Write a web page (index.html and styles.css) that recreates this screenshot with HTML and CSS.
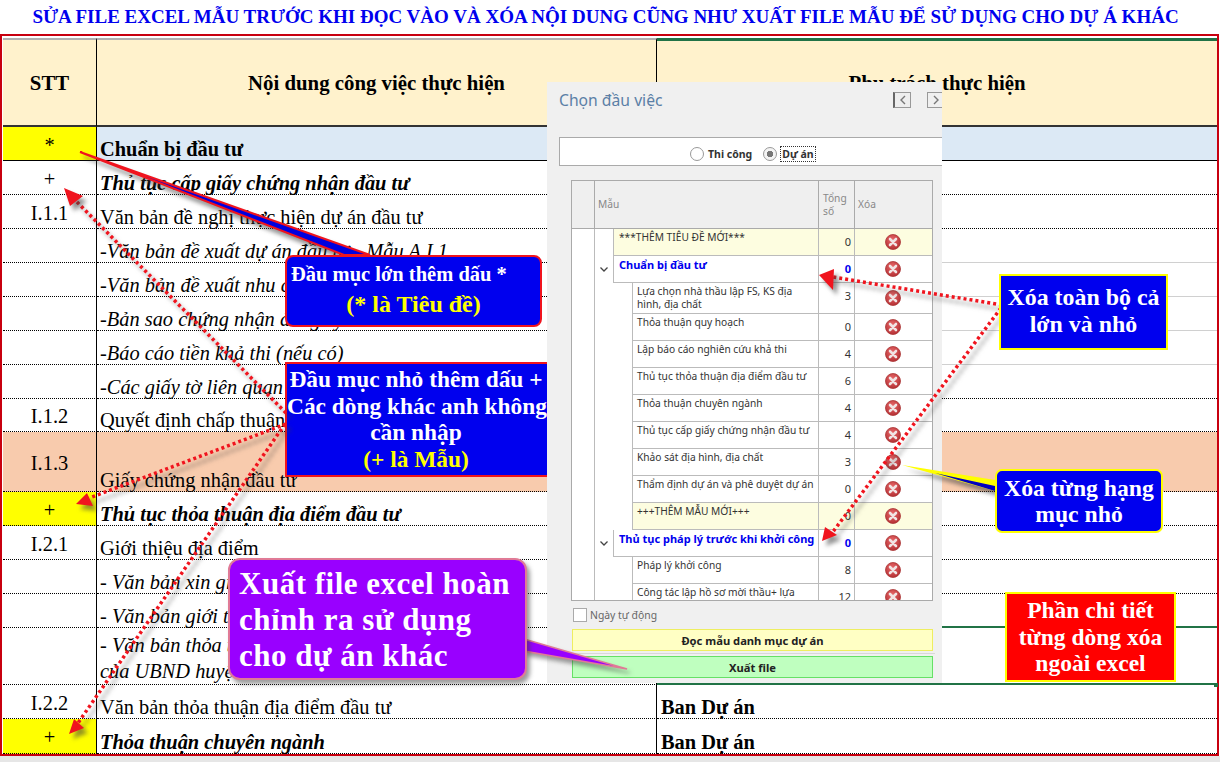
FILE: index.html
```html
<!DOCTYPE html>
<html lang="vi">

<head>
    <meta charset="UTF-8">
    <meta name="viewport" content="width=device-width, initial-scale=1.0">
    <title>Sửa file excel mẫu</title>
    <link rel="stylesheet" href="styles.css">
</head>

<body>
    <svg class="defs" width="0" height="0">
        <defs>
            <radialGradient id="delFill" cx="45%" cy="35%" r="70%">
                <stop offset="0" stop-color="#e8686a" />
                <stop offset="1" stop-color="#b12c30" />
            </radialGradient>
            <symbol id="del" viewBox="0 0 16 16">
                <circle cx="8" cy="8" r="7.5" fill="url(#delFill)" stroke="#a33" stroke-width="0.8" />
                <path d="M5 5l6 6M11 5l-6 6" stroke="#f1e4e4" stroke-width="2.6" stroke-linecap="round" fill="none" />
            </symbol>
        </defs>
    </svg>

    <h1 class="page-title">SỬA FILE EXCEL MẪU TRƯỚC KHI ĐỌC VÀO VÀ XÓA NỘI DUNG CŨNG NHƯ XUẤT FILE MẪU ĐỂ SỬ DỤNG CHO DỰ Á KHÁC</h1>

    <div class="sheet">
        <table class="tbl">
            <colgroup>
                <col class="c-stt">
                <col class="c-name">
                <col class="c-owner">
            </colgroup>
            <tr class="r-head">
                <th>STT</th>
                <th>Nội dung công việc thực hiện</th>
                <th class="head-green">Phụ trách thực hiện</th>
            </tr>
            <tr class="r-main">
                <td class="stt yellow">*</td>
                <td class="name title-row">Chuẩn bị đầu tư</td>
                <td class="title-row"></td>
            </tr>
            <tr>
                <td class="stt">+</td>
                <td class="name group">Thủ tục cấp giấy chứng nhận đầu tư</td>
                <td></td>
            </tr>
            <tr>
                <td class="stt">I.1.1</td>
                <td class="name">Văn bản đề nghị thực hiện dự án đầu tư</td>
                <td></td>
            </tr>
            <tr>
                <td class="stt"></td>
                <td class="name note">-Văn bản đề xuất dự án đầu tư - Mẫu A.I.1</td>
                <td class="thin"></td>
            </tr>
            <tr>
                <td class="stt"></td>
                <td class="name note">-Văn bản đề xuất nhu cầu sử dụng đất</td>
                <td class="thin"></td>
            </tr>
            <tr>
                <td class="stt"></td>
                <td class="name note">-Bản sao chứng nhận đăng ký kinh doanh</td>
                <td class="thin"></td>
            </tr>
            <tr>
                <td class="stt"></td>
                <td class="name note">-Báo cáo tiền khả thi (nếu có)</td>
                <td class="thin"></td>
            </tr>
            <tr>
                <td class="stt"></td>
                <td class="name note">-Các giấy tờ liên quan khác</td>
                <td></td>
            </tr>
            <tr class="r-short">
                <td class="stt">I.1.2</td>
                <td class="name">Quyết định chấp thuận đầu tư</td>
                <td></td>
            </tr>
            <tr class="r-tall peach">
                <td class="stt">I.1.3</td>
                <td class="name">Giấy chứng nhận đầu tư</td>
                <td></td>
            </tr>
            <tr>
                <td class="stt yellow">+</td>
                <td class="name group">Thủ tục thỏa thuận địa điểm đầu tư</td>
                <td></td>
            </tr>
            <tr>
                <td class="stt">I.2.1</td>
                <td class="name">Giới thiệu địa điểm</td>
                <td></td>
            </tr>
            <tr>
                <td class="stt"></td>
                <td class="name note">- Văn bản xin giới thiệu địa điểm</td>
                <td></td>
            </tr>
            <tr>
                <td class="stt"></td>
                <td class="name note">- Văn bản giới thiệu địa điểm</td>
                <td class="sel"></td>
            </tr>
            <tr class="r-wrap">
                <td class="stt"></td>
                <td class="name note">- Văn bản thỏa thuận địa điểm<br>của UBND huyện</td>
                <td class="sel"></td>
            </tr>
            <tr>
                <td class="stt">I.2.2</td>
                <td class="name">Văn bản thỏa thuận địa điểm đầu tư</td>
                <td class="owner">Ban Dự án</td>
            </tr>
            <tr class="r-last">
                <td class="stt yellow">+</td>
                <td class="name group">Thỏa thuận chuyên ngành</td>
                <td class="owner">Ban Dự án</td>
            </tr>
        </table>
    </div>
    <div class="sheet-foot"></div>

    <div class="note-box note-small">Đầu mục nhỏ thêm dấu +<br>Các dòng khác anh không<br>cần nhập<br><span class="hl">(+ là Mẫu)</span></div>

    <div class="dialog">
        <div class="dlg-head">
            <span class="dlg-title">Chọn đầu việc</span>
            <span class="nav nav-prev">
                <svg width="8" height="10" viewBox="0 0 8 10"><path d="M6 1L2 5l4 4" fill="none" stroke="#777" stroke-width="1.4" /></svg>
            </span>
            <span class="nav nav-next">
                <svg width="8" height="10" viewBox="0 0 8 10"><path d="M2 1l4 4-4 4" fill="none" stroke="#777" stroke-width="1.4" /></svg>
            </span>
        </div>
        <div class="radio-box">
            <span class="radio"></span><b class="radio-label">Thi công</b>
            <span class="radio checked"></span><b class="radio-label focused">Dự án</b>
        </div>

        <div class="grid">
            <div class="grid-head">
                <div class="gh-gutter"></div>
                <div class="gh-name">Mẫu</div>
                <div class="gh-num">Tổng<br>số</div>
                <div class="gh-del">Xóa</div>
            </div>
            <div class="grid-body">
                <div class="row lv1 new">
                    <div class="indent"></div>
                    <div class="cell-name">***THÊM TIÊU ĐỀ MỚI***</div>
                    <div class="cell-num">0</div>
                    <div class="cell-del"><svg class="del"><use href="#del" /></svg></div>
                </div>
                <div class="row lv1 parent">
                    <div class="indent"><svg class="chev" width="10" height="7" viewBox="0 0 10 7"><path d="M1.5 1.5L5 5l3.500-3.500" fill="none" stroke="#444" stroke-width="1.300" /></svg></div>
                    <div class="cell-name">Chuẩn bị đầu tư</div>
                    <div class="cell-num">0</div>
                    <div class="cell-del"><svg class="del"><use href="#del" /></svg></div>
                </div>
                <div class="row lv2 two-line">
                    <div class="indent"></div>
                    <div class="cell-name">Lựa chọn nhà thầu lập FS, KS địa hình, địa chất</div>
                    <div class="cell-num">3</div>
                    <div class="cell-del"><svg class="del"><use href="#del" /></svg></div>
                </div>
                <div class="row lv2">
                    <div class="indent"></div>
                    <div class="cell-name">Thỏa thuận quy hoạch</div>
                    <div class="cell-num">0</div>
                    <div class="cell-del"><svg class="del"><use href="#del" /></svg></div>
                </div>
                <div class="row lv2">
                    <div class="indent"></div>
                    <div class="cell-name">Lập báo cáo nghiên cứu khả thi</div>
                    <div class="cell-num">4</div>
                    <div class="cell-del"><svg class="del"><use href="#del" /></svg></div>
                </div>
                <div class="row lv2">
                    <div class="indent"></div>
                    <div class="cell-name">Thủ tục thỏa thuận địa điểm đầu tư</div>
                    <div class="cell-num">6</div>
                    <div class="cell-del"><svg class="del"><use href="#del" /></svg></div>
                </div>
                <div class="row lv2">
                    <div class="indent"></div>
                    <div class="cell-name">Thỏa thuận chuyên ngành</div>
                    <div class="cell-num">4</div>
                    <div class="cell-del"><svg class="del"><use href="#del" /></svg></div>
                </div>
                <div class="row lv2">
                    <div class="indent"></div>
                    <div class="cell-name">Thủ tục cấp giấy chứng nhận đầu tư</div>
                    <div class="cell-num">4</div>
                    <div class="cell-del"><svg class="del"><use href="#del" /></svg></div>
                </div>
                <div class="row lv2">
                    <div class="indent"></div>
                    <div class="cell-name">Khảo sát địa hình, địa chất</div>
                    <div class="cell-num">3</div>
                    <div class="cell-del"><svg class="del"><use href="#del" /></svg></div>
                </div>
                <div class="row lv2">
                    <div class="indent"></div>
                    <div class="cell-name">Thẩm định dự án và phê duyệt dự án</div>
                    <div class="cell-num">0</div>
                    <div class="cell-del"><svg class="del"><use href="#del" /></svg></div>
                </div>
                <div class="row lv2 new">
                    <div class="indent"></div>
                    <div class="cell-name">+++THÊM MẪU MỚI+++</div>
                    <div class="cell-num">0</div>
                    <div class="cell-del"><svg class="del"><use href="#del" /></svg></div>
                </div>
                <div class="row lv1 parent">
                    <div class="indent"><svg class="chev" width="10" height="7" viewBox="0 0 10 7"><path d="M1.5 1.5L5 5l3.500-3.500" fill="none" stroke="#444" stroke-width="1.300" /></svg></div>
                    <div class="cell-name">Thủ tục pháp lý trước khi khởi công</div>
                    <div class="cell-num">0</div>
                    <div class="cell-del"><svg class="del"><use href="#del" /></svg></div>
                </div>
                <div class="row lv2">
                    <div class="indent"></div>
                    <div class="cell-name">Pháp lý khởi công</div>
                    <div class="cell-num">8</div>
                    <div class="cell-del"><svg class="del"><use href="#del" /></svg></div>
                </div>
                <div class="row lv2">
                    <div class="indent"></div>
                    <div class="cell-name">Công tác lập hồ sơ mời thầu+ lựa</div>
                    <div class="cell-num">12</div>
                    <div class="cell-del"><svg class="del"><use href="#del" /></svg></div>
                </div>
            </div>
        </div>

        <label class="auto-date"><span class="check"></span>Ngày tự động</label>
        <div class="btn btn-read">Đọc mẫu danh mục dự án</div>
        <div class="btn-line"></div>
        <div class="btn btn-export">Xuất file</div>
    </div>

    <svg class="arrows" width="1220" height="762" viewBox="0 0 1220 762">
        <g class="shadowed">
            <polygon points="80,152 370,255 344,255" fill="#0000e0" stroke="#f0141e" stroke-width="2" />
        </g>
        <g class="shadowed">
            <polygon points="902,465 995,480 995,491" fill="#ffff00" />
            <polygon points="935,473 995,486 995,491" fill="#0000c0" />
        </g>
        <g class="shadowed dots">
            <line x1="286" y1="413" x2="74" y2="199" />
            <line x1="286" y1="424" x2="92" y2="497" />
            <line x1="285" y1="424" x2="78" y2="723" />
            <line x1="1002" y1="305" x2="833" y2="277" />
            <line x1="1001" y1="308" x2="832" y2="533" />
        </g>
        <g class="shadowed heads">
            <polygon points="64,188 83,196 70,206" />
            <polygon points="76,504 87,493 93,506" />
            <polygon points="69,734 74,719 84,728" />
            <polygon points="819,275 834,269 833,290" />
            <polygon points="822,541 825,527 837,535" />
        </g>
        <polygon class="tail" points="524,639 627,669 524,651" />
        <rect x="1214" y="683" width="4" height="4" fill="#217346" />
    </svg>

    <div class="note-box note-big">Đầu mục lớn thêm dấu *<div class="hl big-hl">(* là Tiêu đề)</div></div>
    <div class="note-box note-all">Xóa toàn bộ cả<br>lớn và nhỏ</div>
    <div class="note-box note-item">Xóa từng hạng<br>mục nhỏ</div>
    <div class="note-box note-excel">Phần chi tiết<br>từng dòng xóa<br>ngoài excel</div>
    <div class="note-box note-export">Xuất file excel hoàn<br>chỉnh ra sử dụng<br>cho dự án khác</div>
</body>

</html>
```

FILE: styles.css
```css
* {
    margin: 0;
    padding: 0;
    box-sizing: border-box;
}

html,
body {
    width: 1220px;
    height: 762px;
    overflow: hidden;
    background-color: #fff;
    font-family: "Liberation Serif", serif;
}

body {
    position: relative;
}

.defs {
    position: absolute;
}

.page-title {
    height: 34px;
    padding-right: 9px;
    line-height: 34px;
    text-align: center;
    font-size: 19px;
    font-weight: bold;
    color: #0000ee;
    white-space: nowrap;
}

/* bang excel */
.sheet {
    width: 1219px;
    height: 722px;
    padding: 2px 0 0 1px;
    border: 2px solid #c8000f;
}

.sheet-foot {
    height: 6px;
    background-color: #e6e6e6;
}

.tbl {
    width: 1214px;
    table-layout: fixed;
    border-collapse: separate;
    border-spacing: 0;
}

.c-stt {
    width: 94px;
}

.c-name,
.c-owner {
    width: 560px;
}

.tbl tr {
    height: 34px;
}

.tbl td {
    height: 34px;
    padding: 0 3px;
    font-size: 20.4px;
    line-height: 22px;
    vertical-align: bottom;
    white-space: nowrap;
    color: #000;
    border-bottom: 1px dotted #000;
    border-right: 1px solid #000;
}

.tbl td:last-child {
    border-right: none;
    padding-left: 4px;
}

.tbl th {
    height: 89px;
    font-size: 20.8px;
    background-color: #fff2cc;
    border-top: 2px solid #b0b0b0;
    border-bottom: 2px solid #333;
    border-right: 1px solid #000;
}

.tbl th:last-child {
    border-right: none;
}

.tbl th.head-green {
    border-top: 3px solid #217346;
}

.tbl td.stt {
    text-align: center;
    vertical-align: middle;
    padding: 2px 0 0;
    line-height: 24px;
}

.tbl .yellow {
    background-color: #ffff00;
}

.tbl .r-main td {
    border-bottom: 1px solid #000;
}

.tbl .title-row {
    background-color: #dce9f5;
    font-weight: bold;
}

.tbl .group {
    font-weight: bold;
    font-style: italic;
}

.tbl .note {
    font-style: italic;
}

.tbl .owner {
    font-weight: bold;
}

.tbl .thin {
    border-bottom: 1px solid #d0d0d0;
}

.tbl .sel {
    border-bottom: 2px solid #217346;
}

.tbl .r-short,
.tbl .r-short td {
    height: 33px;
}

.tbl .r-last,
.tbl .r-last td {
    height: 35px;
}

.tbl .r-tall td {
    height: 60px;
}

.tbl .peach td {
    background-color: #f8cbad;
}

.tbl .r-wrap td {
    height: 57px;
    line-height: 26px;
}

/* hop thoai */
.dialog {
    position: absolute;
    left: 547px;
    top: 82px;
    width: 395px;
    height: 601px;
    overflow: hidden;
    background-color: #f0f0f0;
    font-family: "Noto Sans", sans-serif;
    font-size: 10.2px;
    color: #333;
}

.dlg-head {
    height: 55px;
    padding: 7px 0 0 12px;
    display: flex;
    align-items: flex-start;
}

.dlg-title {
    font-size: 15.7px;
    line-height: 22px;
    color: #5b7fa6;
    flex: 1;
}

.nav {
    width: 18px;
    height: 16px;
    margin-top: 3px;
    display: flex;
    align-items: center;
    justify-content: center;
    border: 1px solid #999;
    flex-shrink: 0;
}

.nav-prev {
    border-left: 2px solid #666;
    background-color: #eee;
}

.nav-next {
    margin-left: 16px;
    margin-right: -3px;
}

.radio-box {
    margin-left: 12px;
    width: 390px;
    height: 29px;
    display: flex;
    align-items: center;
    padding: 4px 0 0 130px;
    background-color: #fff;
    border: 1px solid #aaa;
}

.radio {
    width: 14px;
    height: 14px;
    border: 1px solid #999;
    border-radius: 50%;
    background-color: #fff;
    margin-right: 4px;
}

.radio.checked {
    background: radial-gradient(circle, #777 0, #777 3px, #f4f4f4 3.500px);
}

.radio-label {
    font-size: 10.5px;
    color: #333;
    margin-right: 11px;
}

.radio-label.focused {
    outline: 1px dotted #333;
    padding: 0 1px;
}

.grid {
    margin: 14px 0 0 24px;
    width: 362px;
    height: 421px;
    background-color: #fff;
    border: 1px solid #aaa;
    overflow: hidden;
}

.grid-head {
    height: 48px;
    display: flex;
    background-color: #efefef;
    border-bottom: 1px solid #aaa;
    color: #888;
}

.gh-gutter {
    width: 23px;
    border-right: 1px solid #aaa;
}

.gh-name {
    width: 224px;
    padding-left: 3px;
    line-height: 47px;
    border-right: 1px solid #aaa;
}

.gh-num {
    width: 36px;
    padding: 11px 0 0 4px;
    line-height: 13px;
    border-right: 1px solid #aaa;
}

.gh-del {
    padding-left: 3px;
    line-height: 47px;
}

.row {
    display: flex;
    height: 27px;
}

.row.two-line {
    height: 31px;
}

.indent {
    flex-shrink: 0;
    display: flex;
    align-items: center;
    padding-left: 27px;
    background: linear-gradient(#bbb, #bbb) 22px 0 / 1px 100% no-repeat;
}

.lv1 .indent {
    width: 41px;
}

.lv2 .indent {
    width: 60px;
}

.chev {
    display: block;
}

.cell-name {
    flex: 1;
    padding: 2px 0 0 4px;
    line-height: 13px;
    white-space: normal;
    border-left: 1px solid #bbb;
    border-bottom: 1px solid #bbb;
}

.lv1 .cell-name {
    padding-left: 5px;
}

.cell-num {
    width: 36px;
    padding-right: 3px;
    text-align: right;
    line-height: 26px;
    font-size: 11px;
    border-left: 1px solid #bbb;
    border-bottom: 1px solid #bbb;
}

.cell-del {
    width: 78px;
    display: flex;
    align-items: center;
    justify-content: center;
    padding-right: 1px;
    border-left: 1px solid #bbb;
    border-bottom: 1px solid #bbb;
}

.new .cell-name,
.new .cell-num,
.new .cell-del {
    background-color: #fdfde0;
}

.parent .cell-name,
.parent .cell-num {
    font-size: 11px;
    font-weight: bold;
    color: #0000ee;
}

.del {
    width: 16px;
    height: 16px;
}

.auto-date {
    margin: 6px 0 0 26px;
    height: 15px;
    display: flex;
    align-items: center;
    font-size: 10.4px;
    color: #666;
}

.check {
    width: 14px;
    height: 14px;
    margin-right: 3px;
    background-color: #fff;
    border: 1px solid #aaa;
}

.btn {
    margin-left: 25px;
    width: 361px;
    height: 22px;
    line-height: 21px;
    text-align: center;
    font-size: 11.2px;
    font-weight: bold;
    color: #222;
}

.btn-read {
    margin-top: 7px;
    background-color: #ffffc4;
    border: 1px solid #eeee60;
}

.btn-line {
    margin: 2px 0 2px 25px;
    width: 363px;
    height: 1px;
    background-color: #d8d8d8;
}

.btn-export {
    background-color: #bfffbf;
    border: 1px solid #66e066;
}

/* mui ten va chu thich */
.arrows {
    position: absolute;
    left: 0;
    top: 0;
}

.shadowed {
    filter: drop-shadow(4px 5px 2px rgba(60, 60, 60, 0.55));
}

.dots line {
    stroke: #f0141e;
    stroke-width: 3.5;
    stroke-dasharray: 3 3;
}

.heads polygon {
    fill: #f0141e;
}

.tail {
    fill: #9900ff;
    stroke: #e07a96;
    stroke-width: 1.500;
    filter: drop-shadow(3px 4px 2px rgba(60, 60, 60, 0.5));
}

.note-box {
    position: absolute;
    font-weight: bold;
    color: #fff;
    text-align: center;
    white-space: nowrap;
}

.hl {
    color: #ffff00;
}

.note-big {
    left: 285px;
    top: 255px;
    width: 257px;
    height: 72px;
    padding: 3px 0 0 4px;
    text-align: left;
    font-size: 20.5px;
    line-height: 28px;
    background-color: #0000ee;
    border: 2px solid #f0141e;
    border-radius: 8px;
}

.big-hl {
    text-align: center;
    font-size: 24px;
    padding-right: 4px;
    line-height: 33px;
}

.note-small {
    left: 285px;
    top: 362px;
    width: 270px;
    height: 115px;
    padding-top: 2px;
    padding-right: 8px;
    font-size: 23.4px;
    line-height: 26.5px;
    background-color: #0000ee;
    border: 2px solid #f0141e;
}

.note-all {
    left: 999px;
    top: 274px;
    width: 169px;
    height: 76px;
    padding-top: 8px;
    font-size: 23.9px;
    line-height: 27px;
    background-color: #0000ee;
    border: 2px solid #ffff00;
}

.note-item {
    left: 995px;
    top: 469px;
    width: 168px;
    height: 64px;
    padding-top: 4px;
    font-size: 23.7px;
    line-height: 26px;
    background-color: #0000ee;
    border: 2px solid #ffff00;
    border-radius: 7px;
}

.note-excel {
    left: 1005px;
    top: 592px;
    width: 171px;
    height: 90px;
    padding-top: 3px;
    font-size: 23.5px;
    line-height: 26.500px;
    background-color: #ff0000;
    border: 2px solid #ffff00;
}

.note-export {
    left: 228px;
    top: 558px;
    width: 299px;
    height: 122px;
    padding: 6px 0 0 9px;
    text-align: left;
    font-size: 31px;
    line-height: 36px;
    letter-spacing: 0.5px;
    background-color: #9900ff;
    border: 2px solid #e07a96;
    border-radius: 12px;
    box-shadow: 3px 4px 4px rgba(60, 60, 60, 0.5);
}
```
